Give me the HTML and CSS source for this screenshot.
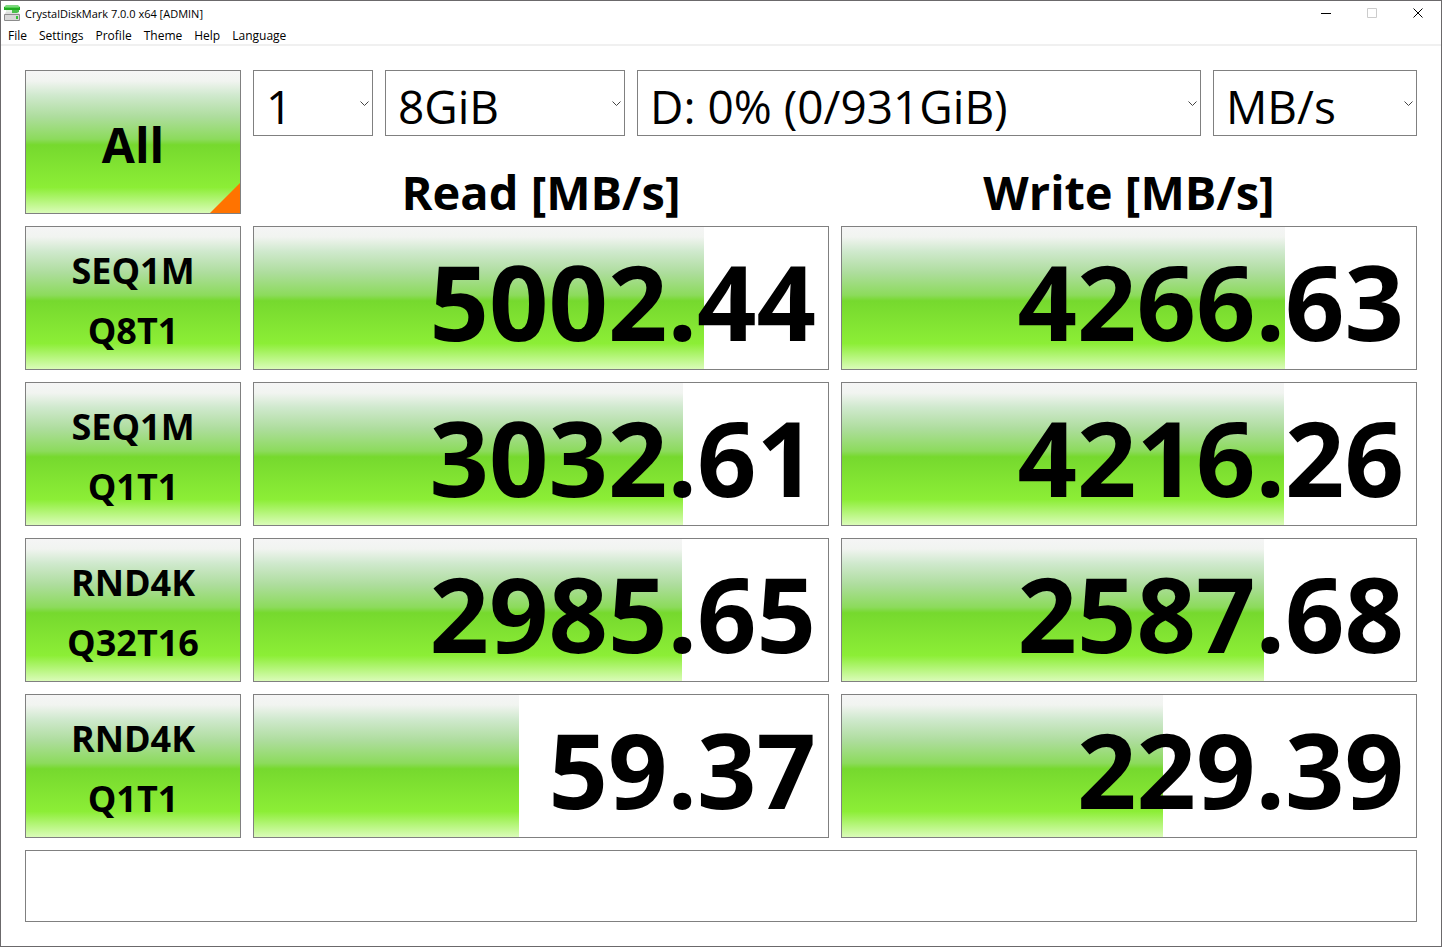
FILE: index.html
```html
<!DOCTYPE html>
<html lang="en">
<head>
  <meta charset="UTF-8" />
  <meta name="viewport" content="width=device-width, initial-scale=1" />
  <title>CrystalDiskMark 7.0.0 x64 [ADMIN]</title>
  <link rel="stylesheet" href="styles.css">
</head>
<body>
  <div class="window">
    <header class="titlebar">
      <svg class="app-icon" width="18" height="18" viewBox="0 0 18 18" aria-hidden="true">
        <path d="M3 1h12l2 2H1z" fill="#7fd67f" />
        <path d="M1 3h16v3H1z" fill="#22aa22" />
        <path d="M2 3h14v1H2z" fill="#4fd24f" />
        <path d="M3 6h10v2H3z" fill="#e4efe4" />
        <path d="M9 6h7v2l-2 1H9z" fill="#4cc04c" />
        <path d="M3 8h6v1h7l1 2H1z" fill="#dedede" />
        <rect x="1" y="10" width="16" height="7" rx="1" fill="#8c8c8c" />
        <rect x="2" y="11" width="14" height="5" fill="#d8d8d8" />
        <rect x="13" y="12" width="2" height="3" fill="#35c435" />
      </svg>
      <h1>CrystalDiskMark 7.0.0 x64 [ADMIN]</h1>
      <div class="window-buttons">
        <button type="button" aria-label="Minimize"><svg width="11" height="11" viewBox="0 0 11 11"><path d="M0 5.500h10" /></svg></button>
        <button type="button" aria-label="Maximize" disabled><svg width="11" height="11" viewBox="0 0 11 11"><path d="M.5.5h9v9h-9z" /></svg></button>
        <button type="button" aria-label="Close"><svg width="11" height="11" viewBox="0 0 11 11"><path d="M.5.5l9 9M9.500.5l-9 9" /></svg></button>
      </div>
    </header>

    <nav class="menu">
      <button type="button">File</button>
      <button type="button">Settings</button>
      <button type="button">Profile</button>
      <button type="button">Theme</button>
      <button type="button">Help</button>
      <button type="button">Language</button>
    </nav>

    <main class="board">
      <button type="button" class="test all">All</button>
      <div class="top">
        <div class="options">
          <div class="combo">
            <select aria-label="Test count"><option>1</option></select>
            <svg width="9" height="5" viewBox="0 0 9 5"><path d="M.5.5l4 4 4-4" /></svg>
          </div>
          <div class="combo">
            <select aria-label="Test size"><option>8GiB</option></select>
            <svg width="9" height="5" viewBox="0 0 9 5"><path d="M.5.5l4 4 4-4" /></svg>
          </div>
          <div class="combo">
            <select aria-label="Drive"><option>D: 0% (0/931GiB)</option></select>
            <svg width="9" height="5" viewBox="0 0 9 5"><path d="M.5.5l4 4 4-4" /></svg>
          </div>
          <div class="combo">
            <select aria-label="Unit"><option>MB/s</option></select>
            <svg width="9" height="5" viewBox="0 0 9 5"><path d="M.5.5l4 4 4-4" /></svg>
          </div>
        </div>
        <div class="headings">
          <h2>Read [MB/s]</h2>
          <h2>Write [MB/s]</h2>
        </div>
      </div>

      <button type="button" class="test">SEQ1M<br>Q8T1</button>
      <div class="result"><div class="bar" style="width: 78.4%"></div><span>5002.44</span></div>
      <div class="result"><div class="bar" style="width: 77.2%"></div><span>4266.63</span></div>

      <button type="button" class="test">SEQ1M<br>Q1T1</button>
      <div class="result"><div class="bar" style="width: 74.7%"></div><span>3032.61</span></div>
      <div class="result"><div class="bar" style="width: 77%"></div><span>4216.26</span></div>

      <button type="button" class="test">RND4K<br>Q32T16</button>
      <div class="result"><div class="bar" style="width: 74.6%"></div><span>2985.65</span></div>
      <div class="result"><div class="bar" style="width: 73.5%"></div><span>2587.68</span></div>

      <button type="button" class="test">RND4K<br>Q1T1</button>
      <div class="result"><div class="bar" style="width: 46.2%"></div><span>59.37</span></div>
      <div class="result"><div class="bar" style="width: 55.9%"></div><span>229.39</span></div>

      <input type="text" class="comment" aria-label="Comment">
    </main>
  </div>
</body>
</html>
```
FILE: styles.css
```css
:root {
  --line: #808080;
  --gap: 12px;
  --green: linear-gradient(to bottom, #f5f5f5 0%, #f1f4f0 7%, #d0e9ce 17%, #aedd9e 32%, #8cdb5c 48%, #76d92e 52%, #8cee36 82%, #dafcb8 100%);
}

* {
  box-sizing: border-box;
}

body {
  margin: 0;
  font-family: "Open Sans", "Noto Sans", sans-serif;
  color: #000;
  background: #fff;
}

button, select, input {
  font-family: inherit;
  color: inherit;
  border-radius: 0;
}

.window {
  display: flex;
  flex-direction: column;
  min-height: 100vh;
  border: 1px solid #6b696b;
}

.titlebar {
  display: flex;
  align-items: center;
  height: 24px;
  padding-left: 2px;
}

.titlebar h1 {
  margin: 0 auto 0 4px;
  font-size: 11px;
  font-weight: normal;
}

.window-buttons {
  display: flex;
}

.window-buttons button {
  display: flex;
  align-items: center;
  justify-content: center;
  width: 46px;
  height: 24px;
  padding: 0;
  border: 0;
  background: none;
}

.window-buttons svg {
  fill: none;
  stroke: #000;
}

.window-buttons button:disabled svg {
  stroke: #ccc;
}

.menu {
  display: flex;
  gap: 12px;
  height: 21px;
  padding: 2px 7px 0;
  border-bottom: 2px solid #f0f0f0;
}

.menu button {
  padding: 0;
  border: 0;
  background: none;
  font-size: 12px;
}

.board {
  flex: 1;
  display: grid;
  grid-template-columns: 216px 1fr 1fr;
  grid-template-rows: repeat(5, 2fr) 1fr;
  gap: var(--gap);
  padding: 24px;
}

.test {
  padding: 5px 0 0;
  border: 1px solid var(--line);
  background: var(--green);
  font-size: 36px;
  font-weight: bold;
  line-height: 60px;
}

.all {
  position: relative;
  font-size: 48px;
}

.all::after {
  content: "";
  position: absolute;
  right: 0;
  bottom: 0;
  width: 30px;
  height: 30px;
  background: #ff7300;
  clip-path: polygon(100% 0, 100% 100%, 0 100%);
}

.top {
  grid-column: span 2;
  display: flex;
  flex-direction: column;
  justify-content: space-between;
}

.options {
  display: grid;
  grid-template-columns: 120px 240px 1fr 204px;
  gap: var(--gap);
}

.combo {
  position: relative;
}

.combo select {
  display: block;
  width: 100%;
  height: 66px;
  padding: 5px 12px 0;
  border: 1px solid var(--line);
  background: #fff;
  appearance: none;
  font-size: 46px;
  line-height: 58px;
}

.combo svg {
  position: absolute;
  right: 4px;
  top: 31px;
  fill: none;
  stroke: #444;
  pointer-events: none;
}

.headings {
  display: grid;
  grid-template-columns: 1fr 1fr;
  gap: var(--gap);
}

.headings h2 {
  margin: 0;
  font-size: 47px;
  line-height: 44px;
  text-align: center;
}

.result {
  display: grid;
  align-items: center;
  border: 1px solid var(--line);
}

.result > * {
  grid-area: 1 / 1;
}

.bar {
  height: 100%;
  background: var(--green);
}

.result span {
  padding: 6px 12px 0 0;
  font-size: 104px;
  font-weight: bold;
  line-height: 104px;
  text-align: right;
}

.comment {
  grid-column: 1 / -1;
  width: 100%;
  padding: 0 12px;
  border: 1px solid var(--line);
  font-size: 36px;
}
```
